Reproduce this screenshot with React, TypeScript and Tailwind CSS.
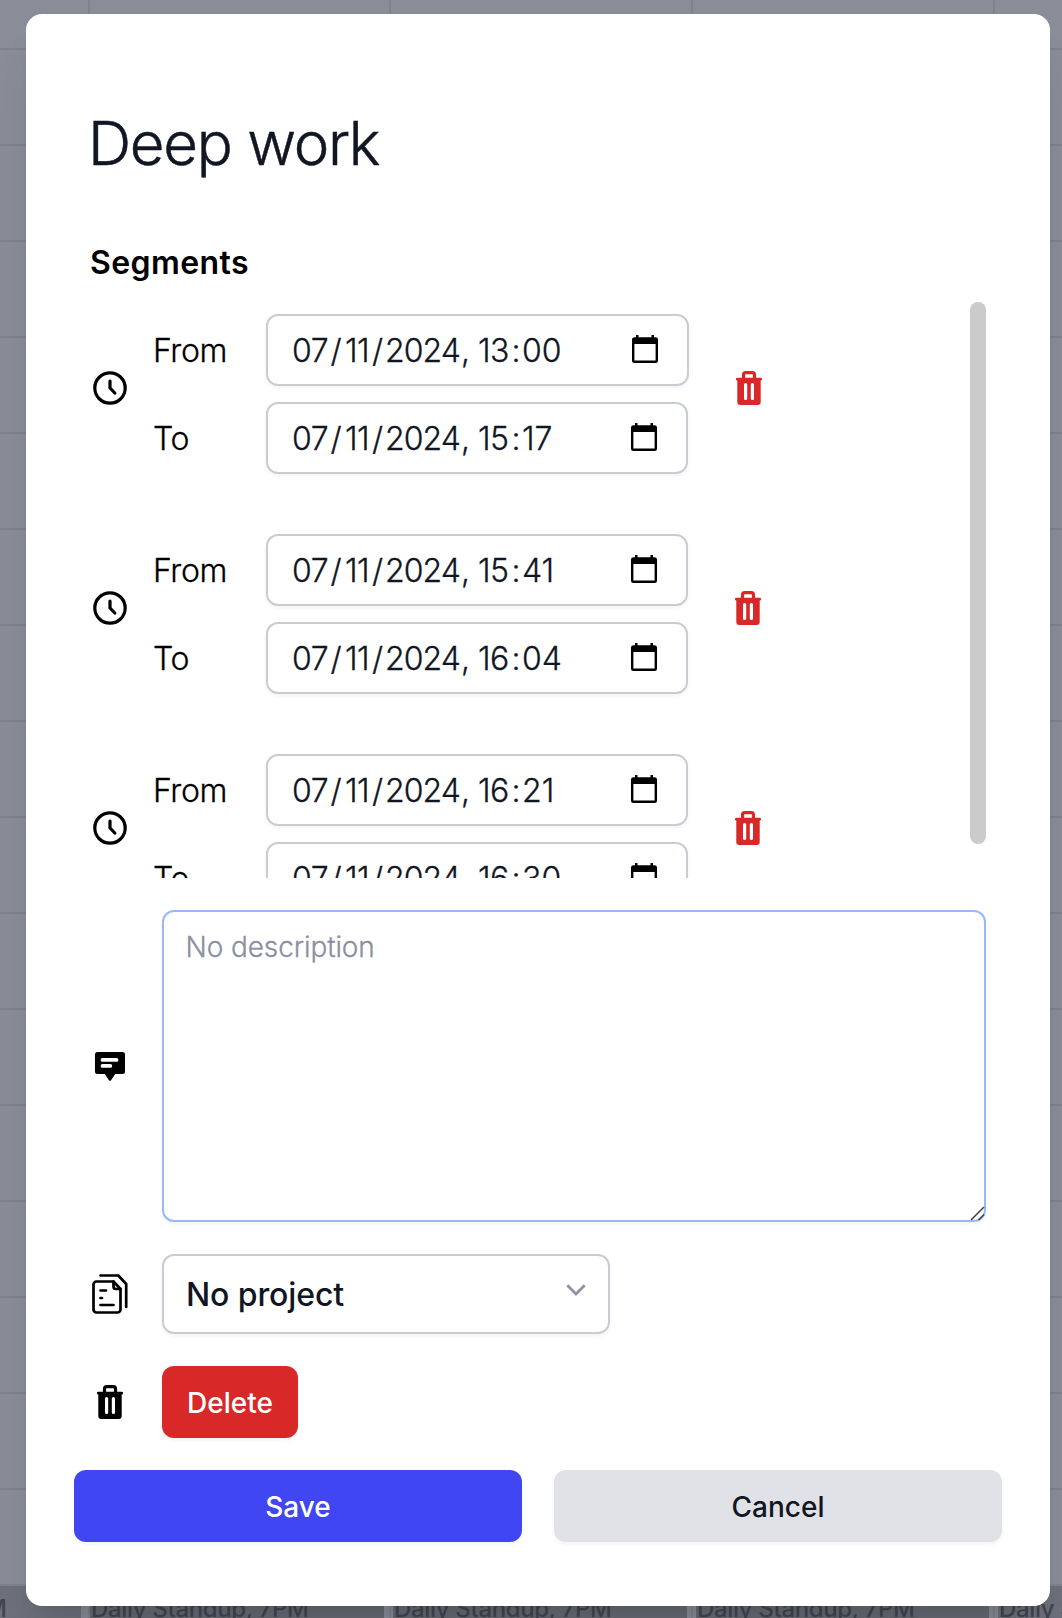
import React from "react";

const font = "font-['Inter',sans-serif]";

function Clock() {
  return (
    <svg className="h-[34px] w-[34px]" viewBox="0 0 34 34" fill="none" stroke="black" strokeWidth="3.2" strokeLinecap="round" strokeLinejoin="round">
      <circle cx="17" cy="17" r="15.2" />
      <path d="M17 10v7l4.8 5" />
    </svg>
  );
}

function Trash({ className }: { className: string }) {
  return (
    <svg className={className} viewBox="0 0 26 34" fill="none">
      <path d="M7.500 8V4C7.500 2.500 8.300 1.600 9.700 1.600h6.600c1.400 0 2.200.9 2.200 2.400V8" stroke="currentColor" strokeWidth="3.2" />
      <path fill="currentColor" fillRule="evenodd" d="M1.300 6.800h23.400a1.300 1.300 0 0 1 1.300 1.500c0 .8-.5 1.300-1.300 1.300V31a3 3 0 0 1-3 3H4.300a3 3 0 0 1-3-3V9.600C.5 9.600 0 9.100 0 8.300a1.300 1.300 0 0 1 1.300-1.500zM9.600 12A1.600 1.600 0 0 0 8 13.600v13.800a1.600 1.600 0 0 0 3.200 0V13.600A1.600 1.600 0 0 0 9.600 12zm6.800 0a1.600 1.600 0 0 0-1.600 1.600v13.800a1.600 1.600 0 0 0 3.200 0V13.600a1.600 1.600 0 0 0-1.600-1.600z" />
    </svg>
  );
}

function Calendar() {
  return (
    <svg className="-mt-[3px] h-7 w-[26px] shrink-0" viewBox="0 0 26 28">
      <path fillRule="evenodd" d="M4 0h2.500v2.200h13V0H22v2.200h1.500A2.500 2.500 0 0 1 26 4.700v20.800a2.500 2.500 0 0 1-2.500 2.500h-21A2.500 2.500 0 0 1 0 25.500V4.700a2.500 2.500 0 0 1 2.500-2.500H4zM2.400 9v16.600h21.200V9z" />
    </svg>
  );
}

function DateField({ time, wide }: { time: string; wide?: boolean }) {
  const [hour, minute] = time.split(":");
  return (
    <div className={`${wide ? "w-[423px]" : "w-[422px]"} flex h-[72px] items-center justify-between rounded-xl border-2 border-[#c9cdd3] bg-white pr-[29px] pl-[23px] shadow-[0_2px_4px_rgba(0,0,0,0.05)]`}>
      <span className="flex pt-[2px] text-[32px] leading-[48px] font-light whitespace-pre text-[#111623] [-webkit-text-stroke:0.3px_currentColor]">
        <span className="w-[36px] pl-px tracking-[-0.3px]">07</span>
        <span className="w-[18px] text-center">/</span>
        <span className="w-[26px] tracking-[-0.5px]">11</span>
        <span className="w-[13px] text-center">/</span>
        <span className="w-[77px] pl-px tracking-[-0.9px]">2024</span>
        <span className="w-[17px]">,</span>
        <span className="w-[32px] tracking-[-0.5px]">{hour}</span>
        <span className="w-[12px] text-center">:</span>
        <span>{minute}</span>
      </span>
      <Calendar />
    </div>
  );
}

const segments = [
  { from: "13:00", to: "15:17" },
  { from: "15:41", to: "16:04" },
  { from: "16:21", to: "16:30" },
];

function Segment({ from, to, first }: { from: string; to: string; first: boolean }) {
  return (
    <div className="flex h-[160px] shrink-0 items-center">
      <div className="w-[60px] pb-[12px]"><Clock /></div>
      <div className="flex flex-col gap-4">
        {[["From", from], ["To", to]].map(([label, value]) => (
          <div key={label} className="flex items-center">
            <span className="w-[113px] pt-[2px] text-[32px] font-light tracking-[-0.4px] [-webkit-text-stroke:0.3px_currentColor]">{label}</span>
            <DateField time={value} wide={first && label === "From"} />
          </div>
        ))}
      </div>
      <div className="ml-[47px] pb-[12px] text-[#d92828]"><Trash className="h-[34px] w-[26px]" /></div>
    </div>
  );
}

const hours = Array.from({ length: 16 }, (_, i) => i);

function CalendarBackdrop() {
  return (
    <div className="absolute inset-0 overflow-hidden bg-[#898d98]">
      <div className="absolute inset-0 flex">
        <div className="w-[90px] shrink-0 border-r-2 border-[#7f838f]" />
        <div className="w-[301px] shrink-0 border-r-2 border-[#7f838f]" />
        <div className="w-[302px] shrink-0 border-r-2 border-[#7f838f]" />
        <div className="w-[302px] shrink-0 border-r-2 border-[#7f838f]" />
      </div>
      <div className="relative h-[50px] border-b-2 border-[#7f838f]" />
      {hours.map((h) => (
        <div key={h} className="relative h-24 border-b-2 border-[#7f838f]" />
      ))}
      <div className="absolute top-[1586px] left-0 flex h-8 gap-[9px] text-[24px] leading-[45px] font-medium tracking-[-0.35px] whitespace-nowrap text-[#414550]">
        <div className="w-[81px] shrink-0 bg-[#6c717b]"><span className="-ml-[15px]">M</span></div>
        <div className="w-[294px] shrink-0 bg-[#666a74] pl-px">Daily Standup, 7PM</div>
        <div className="w-[294px] shrink-0 bg-[#666a74] pl-px">Daily Standup, 7PM</div>
        <div className="w-[293px] shrink-0 bg-[#666a74] pl-px">Daily Standup, 7PM</div>
        <div className="w-[293px] shrink-0 bg-[#6c717b] pl-px">Daily Standup, 7PM</div>
      </div>
    </div>
  );
}

export default function App() {
  return (
    <main className={`relative h-[1618px] w-[1062px] overflow-hidden text-black ${font}`}>
      <CalendarBackdrop />
      <div className="relative mt-[14px] ml-[26px] flex h-[1592px] w-[1024px] flex-col rounded-2xl bg-white px-12 shadow-[0_40px_50px_-10px_rgba(0,0,0,0.1),0_16px_20px_-12px_rgba(0,0,0,0.1)]">
        <h1 className="mt-[93px] mb-px ml-[14px] text-[60px] leading-[72px] font-light tracking-[-1.3px] text-[#111623] [-webkit-text-stroke:0.5px_currentColor]">Deep work</h1>
        <h2 className="mt-[59px] -mb-px ml-4 text-[32px] leading-[48px] font-semibold tracking-[0.4px]">Segments</h2>
        <section className="mt-[14px] ml-[19px] flex h-[578px] w-[893px] justify-between overflow-hidden">
          <div className="flex flex-col gap-[60px] pt-[14px]">
            {segments.map((s, i) => <Segment key={s.from} {...s} first={i === 0} />)}
          </div>
          <div className="mt-[2px] h-[542px] w-4 rounded-full bg-[#cbcbcb]" />
        </section>
        <div className="mt-8 ml-4 flex items-center">
          <svg className="mt-px mr-[37px] ml-[5px] h-[29px] w-[30px]" viewBox="0 0 30 29">
            <path fillRule="evenodd" d="M2.500 0h25A2.500 2.500 0 0 1 30 2.500v17a2.500 2.500 0 0 1-2.500 2.500h-7.300l-4.100 6.200a1.300 1.300 0 0 1-2.200 0L9.800 22H2.500A2.500 2.500 0 0 1 0 19.500v-17A2.500 2.500 0 0 1 2.500 0zM7.500 6a1.900 1.900 0 0 0 0 3.800h14a1.900 1.900 0 0 0 0-3.800zm0 6a1.900 1.900 0 0 0 0 3.800h7.800a1.900 1.900 0 0 0 0-3.800z" />
          </svg>
          <div className="relative h-[312px] w-[824px] rounded-xl border-2 border-[#9ab8f8] px-[21.500px] py-[14px] text-[28px] leading-[42px] font-light tracking-[-0.1px] text-[#8b8fa0] shadow-[0_2px_4px_rgba(0,0,0,0.05)] [-webkit-text-stroke:0.3px_currentColor]">
            No description
            <svg className="absolute -right-px -bottom-px h-[15px] w-[15px]" viewBox="0 0 15 15" stroke="#404040" strokeWidth="1.5"><path d="M1 14 14 1M8.500 14l5.500-5.500" /></svg>
          </div>
        </div>
        <div className="mt-8 ml-[18px] flex items-center">
          <svg className="mr-[34px] h-10 w-9" viewBox="0 0 36 40" fill="none" stroke="black" strokeWidth="2.7" strokeLinecap="round" strokeLinejoin="round">
            <path d="M8.500 1.500h17.800l7.900 8.500v23" />
            <path d="M4 7.500h17.500l7 7.500V35.500a3 3 0 0 1-3 3H4.500a3 3 0 0 1-3-3V10.500a3 3 0 0 1 3-3z" />
            <path d="M21.500 7.500v5a2.500 2.500 0 0 0 2.500 2.500h4.500M8.500 16.500h5.500M8.500 24h1.500M8.500 31h13" />
          </svg>
          <div className="flex h-20 w-[448px] items-center justify-between rounded-xl border-2 border-[#c9cdd3] pr-[22px] pl-[22px] text-[32px] font-medium tracking-[-0.1px] text-[#111623] shadow-[0_2px_4px_rgba(0,0,0,0.05)]">
            <span className="pt-[2px]">No project</span>
            <svg className="-mt-2 h-3 w-5" viewBox="0 0 20 12" fill="none" stroke="#8e93a5" strokeWidth="2.8"><path d="m1.300 1.200 8.700 8.700 8.700-8.700" /></svg>
          </div>
        </div>
        <div className="mt-8 ml-[23px] flex items-center">
          <Trash className="mr-[39px] h-[34px] w-[26px]" />
          <button className="h-[72px] w-[136px] rounded-xl bg-[#d92828] pt-[2px] text-[28px] font-medium text-white shadow-[0_2px_4px_rgba(0,0,0,0.05)]">Delete</button>
        </div>
        <div className="mt-8 flex gap-8 text-[28px] font-medium">
          <button className="h-[72px] w-[448px] rounded-xl bg-[#4046f2] pt-[2px] text-white shadow-[0_2px_4px_rgba(0,0,0,0.05)]">Save</button>
          <button className="h-[72px] w-[448px] rounded-xl bg-[#e1e2e8] pt-[2px] text-[#111623] shadow-[0_2px_4px_rgba(0,0,0,0.05)]">Cancel</button>
        </div>
      </div>
    </main>
  );
}
